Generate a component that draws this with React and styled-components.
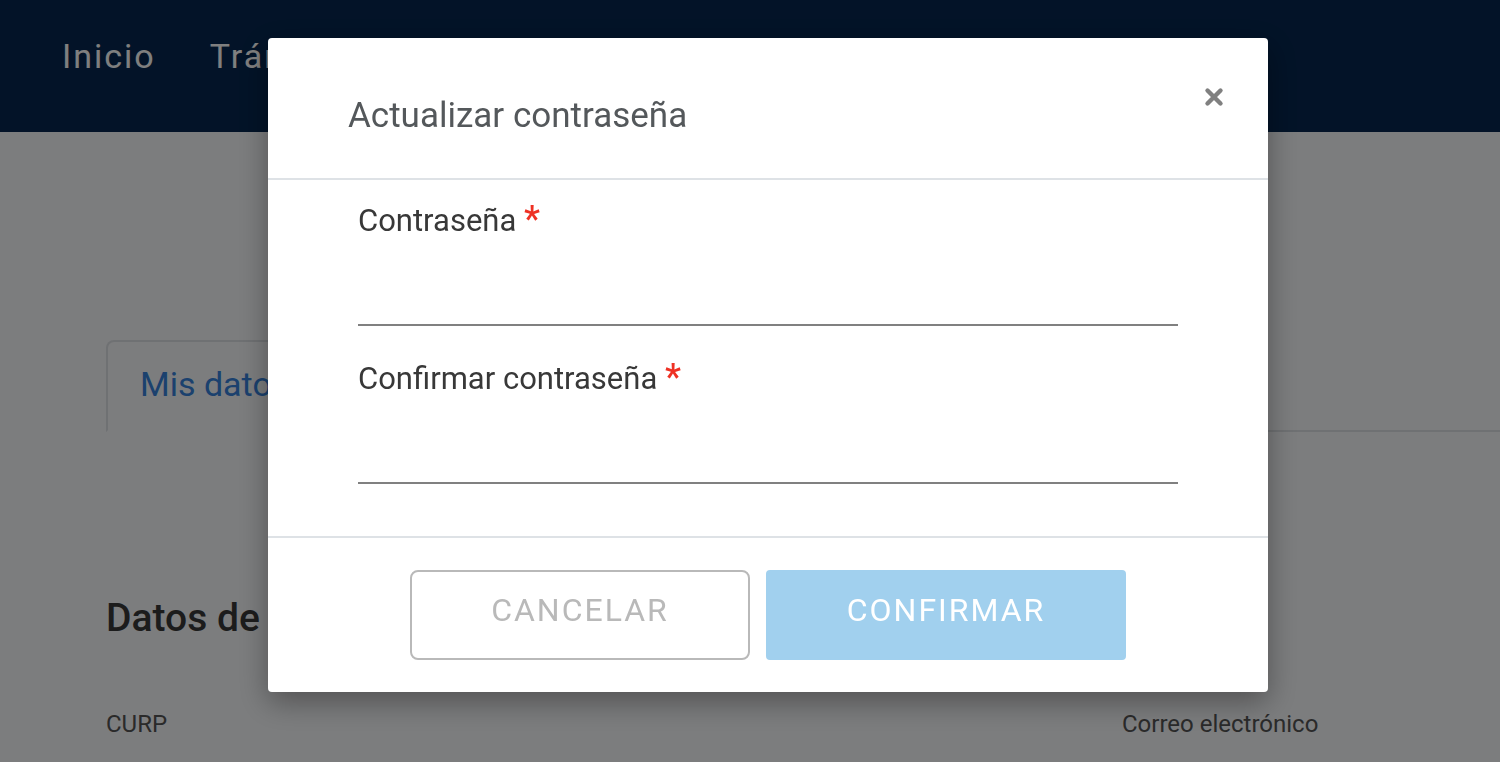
import React from "react";
import styled, { createGlobalStyle } from "styled-components";

const GlobalStyle = createGlobalStyle`
  *, *::before, *::after { box-sizing: border-box; }
  body {
    margin: 0;
    background: #f9fafd;
    color: #383838;
    font-family: Roboto, "Noto Sans", sans-serif;
    overflow: hidden;
  }
  button, input { font: inherit; }
`;

const TopBar = styled.header`
  background: #062750;
  padding: 32px 62px 52px;
`;

const Nav = styled.nav`
  display: flex;
  gap: 54px;
`;

const NavLink = styled.a`
  color: #fff;
  font-size: 34px;
  line-height: 48px;
  letter-spacing: 2px;
  text-decoration: none;
`;

const Content = styled.main`
  padding: 208px 0 0 106px;
`;

const Tabs = styled.div`
  display: flex;
  align-items: flex-end;
`;

const Tab = styled.button`
  height: 92px;
  padding: 0 32px 4px;
  border: 2px solid #dee2e6;
  border-bottom-color: transparent;
  border-radius: 8px 8px 0 0;
  background: transparent;
  color: #3682dc;
  font-size: 34px;
  line-height: 48px;
`;

const TabRule = styled.div`
  flex: 1;
  border-bottom: 2px solid #dee2e6;
`;

const SectionTitle = styled.h2`
  margin: 160px 0 64px;
  font-size: 39px;
  line-height: 52px;
  font-weight: 500;
`;

const Details = styled.div`
  display: grid;
  grid-template-columns: 1016fr 378fr;
  padding-bottom: 16px;
`;

const Detail = styled.span`
  font-size: 24px;
  line-height: 32px;
  color: #555;
`;

const Backdrop = styled.div`
  position: fixed;
  inset: 0;
  display: flex;
  justify-content: center;
  align-items: flex-start;
  padding: 38px 0 0 36px;
  background: rgba(0, 0, 0, 0.5);
  overflow: auto;
`;

const Dialog = styled.section`
  width: 100%;
  max-width: 1000px;
  border-radius: 4px;
  background: #fff;
  box-shadow: 0 10px 30px rgba(0, 0, 0, 0.35);
`;

const DialogHeader = styled.header`
  display: flex;
  justify-content: space-between;
  align-items: flex-start;
  padding: 40px 36px 32px 80px;
  border-bottom: 2px solid #dee2e6;
`;

const DialogTitle = styled.h1`
  margin: 0;
  padding-top: 8px;
  color: #54585b;
  font-size: 35px;
  line-height: 60px;
  font-weight: 400;
`;

const CloseButton = styled.button`
  display: flex;
  padding: 6px 5px;
  border: 0;
  background: transparent;
  color: #808080;
`;

const DialogBody = styled.div`
  display: grid;
  gap: 28px;
  padding: 16px 90px 52px;
`;

const Field = styled.label`
  display: block;
  font-size: 31px;
  line-height: 50px;
`;

const Required = styled.span`
  color: #ee3124;
  font-size: 36px;
  font-weight: 500;
  line-height: 0;
`;

const PasswordInput = styled.input`
  display: block;
  width: 100%;
  height: 80px;
  padding: 0;
  border: 0;
  border-bottom: 2px solid #808080;
  border-radius: 0;
  background: transparent;
  outline: none;
`;

const DialogFooter = styled.footer`
  display: flex;
  justify-content: center;
  gap: 16px;
  padding: 32px;
  border-top: 2px solid #dee2e6;
`;

const ActionButton = styled.button`
  flex: 0 1 ${(p) => (p.$primary ? "360px" : "340px")};
  height: 90px;
  padding: 0 0 10px;
  border: 2px solid ${(p) => (p.$primary ? "#a1d0ee" : "#b9b9b9")};
  border-radius: ${(p) => (p.$primary ? "4px" : "8px")};
  background: ${(p) => (p.$primary ? "#a1d0ee" : "#fff")};
  color: ${(p) => (p.$primary ? "#fff" : "#b9b9b9")};
  font-size: 32px;
  letter-spacing: 2px;
`;

function CloseIcon() {
  return (
    <svg width="26" height="26" viewBox="0 0 26 26" fill="none" aria-hidden="true">
      <path d="M6.5 6.5L19.5 19.5M19.5 6.5L6.5 19.5" stroke="currentColor" strokeWidth="4.4" strokeLinecap="round" />
    </svg>
  );
}

function PasswordField({ label, name }) {
  return (
    <Field>
      {label} <Required>*</Required>
      <PasswordInput type="password" name={name} required />
    </Field>
  );
}

export default function App() {
  return (
    <>
      <GlobalStyle />
      <TopBar>
        <Nav>
          <NavLink href="#inicio">Inicio</NavLink>
          <NavLink href="#tramites">Trámites</NavLink>
        </Nav>
      </TopBar>
      <Content>
        <Tabs>
          <Tab type="button">Mis datos</Tab>
          <TabRule />
        </Tabs>
        <SectionTitle>Datos de</SectionTitle>
        <Details>
          <Detail>CURP</Detail>
          <Detail>Correo electrónico</Detail>
        </Details>
      </Content>
      <Backdrop>
        <Dialog role="dialog" aria-modal="true" aria-labelledby="dialog-title">
          <DialogHeader>
            <DialogTitle id="dialog-title">Actualizar contraseña</DialogTitle>
            <CloseButton type="button" aria-label="Cerrar">
              <CloseIcon />
            </CloseButton>
          </DialogHeader>
          <DialogBody>
            <PasswordField label="Contraseña" name="password" />
            <PasswordField label="Confirmar contraseña" name="confirmation" />
          </DialogBody>
          <DialogFooter>
            <ActionButton type="button">CANCELAR</ActionButton>
            <ActionButton type="button" $primary>CONFIRMAR</ActionButton>
          </DialogFooter>
        </Dialog>
      </Backdrop>
    </>
  );
}
